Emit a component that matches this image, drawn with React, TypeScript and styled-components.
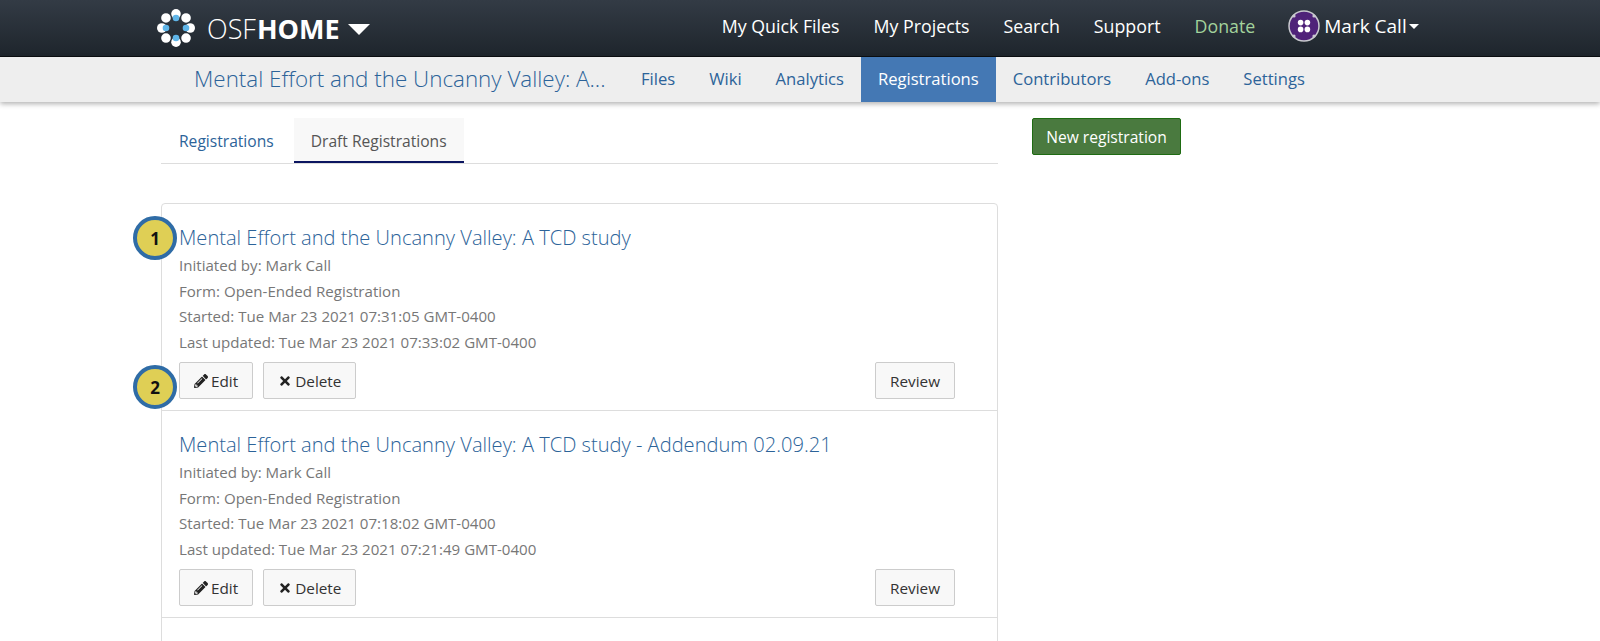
import React from 'react';
import styled, { createGlobalStyle } from 'styled-components';
import { FaPencilAlt, FaTimes } from 'react-icons/fa';

const GlobalStyle = createGlobalStyle`
    html, body {
        margin: 0;
        padding: 0;
        height: 641px;
        overflow: hidden;
        background: #fff;
        font-family: "Open Sans", "Liberation Sans", sans-serif;
    }
`;

const TopBar = styled.header`
    display: flex;
    align-items: center;
    height: 56px;
    padding-left: 157px;
    background: linear-gradient(to bottom, #333b45, #1e252c);
    border-bottom: 1px solid #0b0e11;
`;

const Brand = styled.div`
    display: flex;
    align-items: center;
    color: #fff;
    font-size: 27px;
`;

const BrandLogo = styled.svg`
    width: 38px;
    height: 38px;
    margin-right: 12px;
`;

const BrandLight = styled.span`
    font-weight: 300;
    margin-right: 1px;
`;

const BrandBold = styled.span`
    font-weight: 700;
`;

const BrandCaret = styled.span`
    width: 0;
    height: 0;
    margin-left: 8px;
    margin-top: 3px;
    border-left: 11px solid transparent;
    border-right: 11px solid transparent;
    border-top: 11px solid #fff;
`;

const TopLinks = styled.nav`
    display: flex;
    align-items: center;
    margin-left: 335px;
    padding-bottom: 4px;
`;

const TopLink = styled.a<{ $donate?: boolean }>`
    font-size: 17.8px;
    color: ${props => props.$donate ? '#a3d39c' : '#fff'};
    padding: 0 17px;
    white-space: nowrap;
`;

const UserMenu = styled.div`
    display: flex;
    align-items: center;
    margin-left: 16px;
    color: #fff;
    font-size: 19px;
`;

const Avatar = styled.svg`
    width: 32px;
    height: 32px;
    margin-right: 4px;
`;

const UserCaret = styled.span`
    width: 0;
    height: 0;
    margin-left: 2px;
    border-left: 5px solid transparent;
    border-right: 5px solid transparent;
    border-top: 5px solid #fff;
`;

const SubBar = styled.div`
    display: flex;
    align-items: stretch;
    height: 45px;
    padding-left: 194px;
    background: #eee;
    box-shadow: 0 2px 5px rgba(0, 0, 0, 0.3);
`;

const ProjectTitle = styled.a`
    width: 430px;
    font-size: 22.4px;
    font-weight: 300;
    line-height: 43px;
    color: #2c6399;
    white-space: nowrap;
`;

const SubLink = styled.a<{ $active?: boolean }>`
    font-size: 16.6px;
    line-height: 44px;
    padding: 0 17px 1px;
    color: ${props => props.$active ? '#fff' : '#2c6399'};
    background: ${props => props.$active ? '#4478b4' : 'transparent'};
`;

const Page = styled.main`
    display: flex;
    align-items: flex-start;
    padding: 16px 0 0 161px;
`;

const Content = styled.section`
    width: 837px;
`;

const Tabs = styled.div`
    display: flex;
    height: 45px;
    border-bottom: 1px solid #ddd;
    margin-bottom: 39px;
`;

const Tab = styled.a<{ $active?: boolean }>`
    height: 45px;
    font-size: 15.6px;
    line-height: 47px;
    padding: 0 17px 0 ${props => props.$active ? '17px' : '18px'};
    margin-right: ${props => props.$active ? '0' : '3px'};
    color: ${props => props.$active ? '#555' : '#2c6399'};
    background: ${props => props.$active ? '#f8f8f8' : 'transparent'};
    box-shadow: ${props => props.$active ? 'inset 0 -2px 0 #0b1560' : 'none'};
`;

const Panel = styled.div`
    position: relative;
    border: 1px solid #ddd;
    border-radius: 4px;
    height: 600px;
`;

const Row = styled.article`
    position: relative;
    box-sizing: border-box;
    height: 207px;
    padding: 20px 42px 0 17px;
    border-bottom: 1px solid #ddd;
`;

const RowTitle = styled.a`
    display: block;
    font-size: 20.1px;
    font-weight: 300;
    line-height: 28px;
    color: #2c6399;
    margin-bottom: 1px;
`;

const Meta = styled.div`
    font-size: 15.1px;
    line-height: 25.5px;
    color: #777;
`;

const Actions = styled.div`
    display: flex;
    gap: 10px;
    margin-top: 7px;
`;

const Button = styled.button<{ $push?: boolean }>`
    display: flex;
    align-items: center;
    gap: 3px;
    height: 37px;
    padding: 0 14px;
    margin-left: ${props => props.$push ? 'auto' : '0'};
    font-family: inherit;
    font-size: 15.3px;
    color: #333;
    background: #f8f8f8;
    border: 1px solid #ccc;
    border-radius: 2px;

    svg {
        font-size: 14px;
        color: #222;
    }
`;

const NewButton = styled.button`
    margin-left: 34px;
    width: 149px;
    height: 37px;
    font-family: inherit;
    font-size: 15.6px;
    color: #fff;
    background: #4a7a3f;
    border: 1px solid #1e6b12;
    border-radius: 2px;
`;

const Badge = styled.span<{ $top: number }>`
    position: absolute;
    left: -29px;
    top: ${props => props.$top}px;
    box-sizing: border-box;
    width: 44px;
    height: 44px;
    display: flex;
    align-items: center;
    justify-content: center;
    border-radius: 50%;
    background: #dfcf55;
    border: 4px solid #2f6ca6;
    font-size: 17px;
    font-weight: 700;
    color: #111;
`;

interface Draft {
    title: string;
    started: string;
    updated: string;
}

const drafts: Draft[] = [
    {
        title: 'Mental Effort and the Uncanny Valley: A TCD study',
        started: 'Tue Mar 23 2021 07:31:05 GMT-0400',
        updated: 'Tue Mar 23 2021 07:33:02 GMT-0400',
    },
    {
        title: 'Mental Effort and the Uncanny Valley: A TCD study - Addendum 02.09.21',
        started: 'Tue Mar 23 2021 07:18:02 GMT-0400',
        updated: 'Tue Mar 23 2021 07:21:49 GMT-0400',
    },
];

const Logo = () => {
    const spots = [0, 45, 90, 135, 180, 225, 270, 315];
    return (
        <BrandLogo viewBox="0 0 38 38">
            {spots.map(a => (
                <g key={a} transform={`rotate(${a} 19 19)`}>
                    <circle cx="19" cy="4.8" r="4.8" fill="#fff" />
                    {a % 90 === 0 && <circle cx="19" cy="9" r="3.3" fill="#5fb5e8" />}
                </g>
            ))}
        </BrandLogo>
    );
};

const UserAvatar = () => (
    <Avatar viewBox="0 0 32 32">
        <circle cx="16" cy="16" r="15" fill="#4f2279" stroke="#c9c9cf" strokeWidth="1.5" />
        <circle cx="12.6" cy="12.6" r="2.8" fill="#fff" />
        <circle cx="19.4" cy="12.6" r="2.8" fill="#fff" />
        <circle cx="12.6" cy="19.4" r="2.8" fill="#fff" />
        <circle cx="19.4" cy="19.4" r="2.8" fill="#fff" />
        <circle cx="6" cy="6" r="1.6" fill="#c9c9cf" />
        <circle cx="26" cy="6" r="1.6" fill="#c9c9cf" />
        <circle cx="6" cy="26" r="1.6" fill="#c9c9cf" />
        <circle cx="26" cy="26" r="1.6" fill="#c9c9cf" />
    </Avatar>
);

const App: React.FC = () => {
    return (
        <>
            <GlobalStyle />
            <TopBar>
                <Brand>
                    <Logo />
                    <BrandLight>OSF</BrandLight>
                    <BrandBold>HOME</BrandBold>
                    <BrandCaret />
                </Brand>
                <TopLinks>
                    <TopLink>My Quick Files</TopLink>
                    <TopLink>My Projects</TopLink>
                    <TopLink>Search</TopLink>
                    <TopLink>Support</TopLink>
                    <TopLink $donate>Donate</TopLink>
                    <UserMenu>
                        <UserAvatar />
                        Mark Call
                        <UserCaret />
                    </UserMenu>
                </TopLinks>
            </TopBar>
            <SubBar>
                <ProjectTitle>Mental Effort and the Uncanny Valley: A...</ProjectTitle>
                <SubLink>Files</SubLink>
                <SubLink>Wiki</SubLink>
                <SubLink>Analytics</SubLink>
                <SubLink $active>Registrations</SubLink>
                <SubLink>Contributors</SubLink>
                <SubLink>Add-ons</SubLink>
                <SubLink>Settings</SubLink>
            </SubBar>
            <Page>
                <Content>
                    <Tabs>
                        <Tab>Registrations</Tab>
                        <Tab $active>Draft Registrations</Tab>
                    </Tabs>
                    <Panel>
                        {drafts.map(d => (
                            <Row key={d.title}>
                                <RowTitle>{d.title}</RowTitle>
                                <Meta>Initiated by: Mark Call</Meta>
                                <Meta>Form: Open-Ended Registration</Meta>
                                <Meta>Started: {d.started}</Meta>
                                <Meta>Last updated: {d.updated}</Meta>
                                <Actions>
                                    <Button><FaPencilAlt />Edit</Button>
                                    <Button><FaTimes />Delete</Button>
                                    <Button $push>Review</Button>
                                </Actions>
                            </Row>
                        ))}
                        <Badge $top={12}>1</Badge>
                        <Badge $top={161}>2</Badge>
                    </Panel>
                </Content>
                <NewButton>New registration</NewButton>
            </Page>
        </>
    );
};

export default App;
